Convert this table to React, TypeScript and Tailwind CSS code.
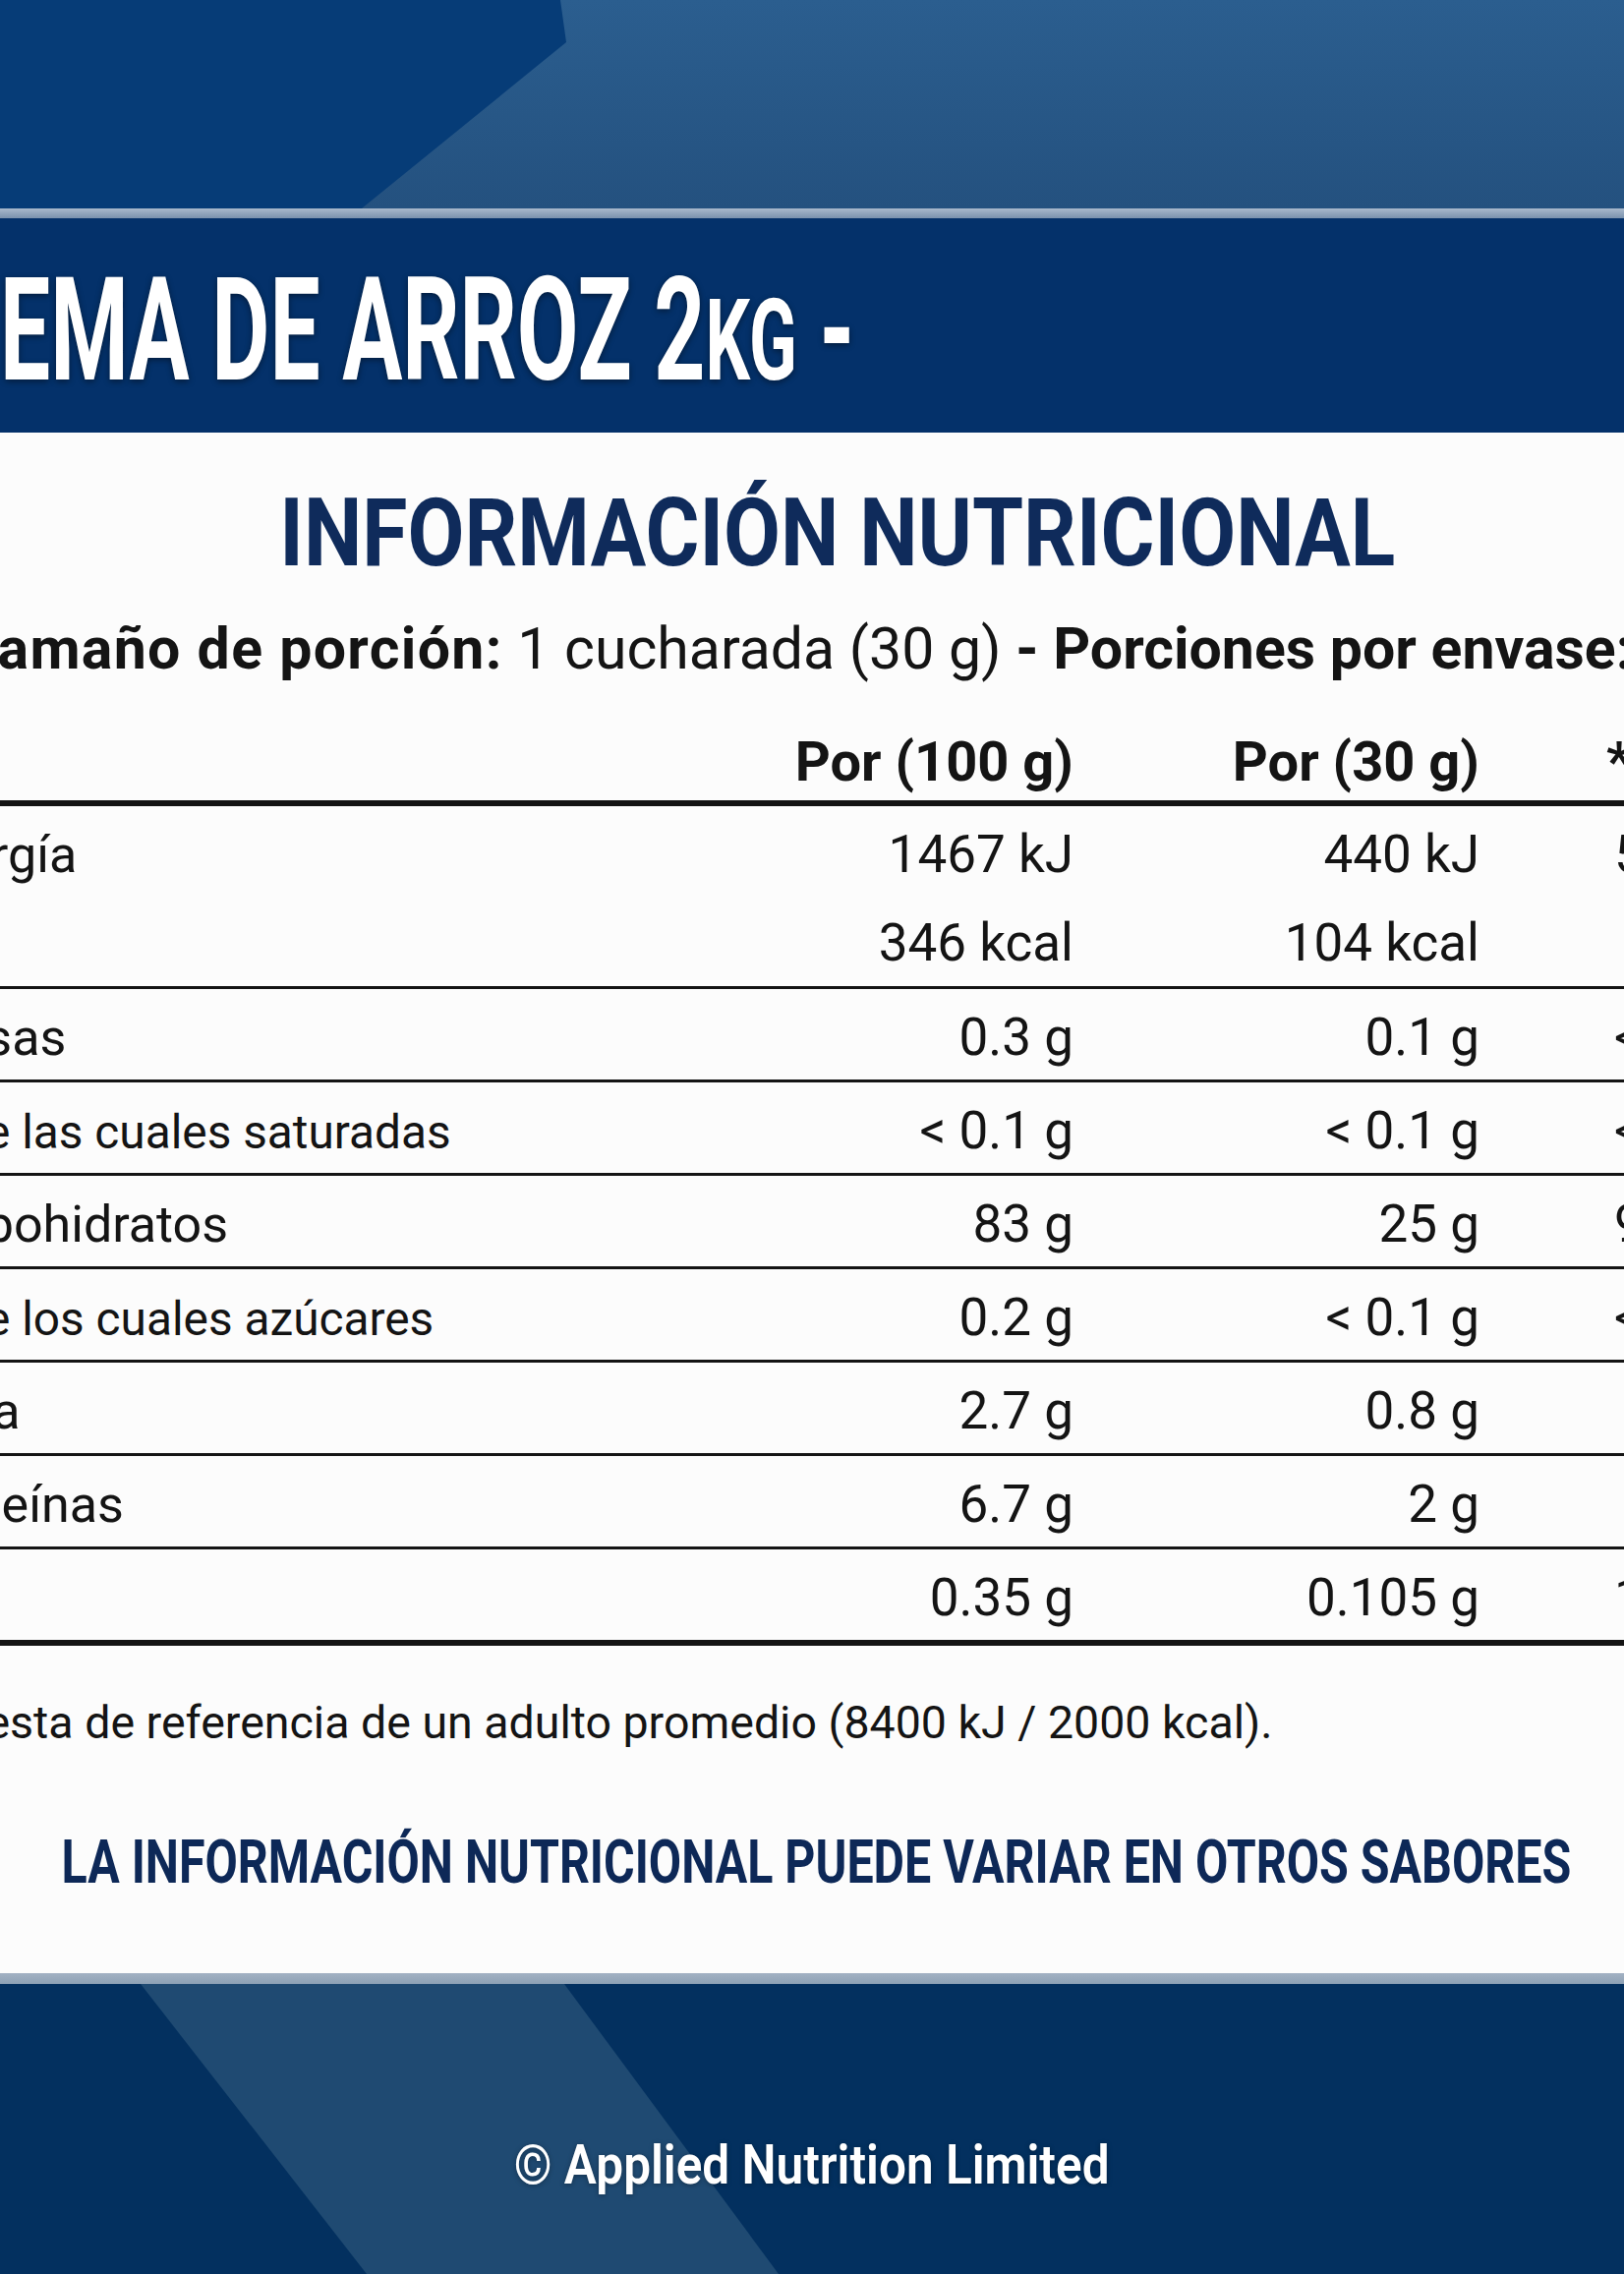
import React from 'react';

type Row = {
  label: string;
  sub?: boolean;
  per100: string;
  per30: string;
  ir: string;
};

const rows: Row[] = [
  { label: 'Grasas', per100: '0.3 g', per30: '0.1 g', ir: '<1%' },
  { label: 'de las cuales saturadas', sub: true, per100: '< 0.1 g', per30: '< 0.1 g', ir: '<1%' },
  { label: 'Carbohidratos', per100: '83 g', per30: '25 g', ir: '9%' },
  { label: 'de los cuales azúcares', sub: true, per100: '0.2 g', per30: '< 0.1 g', ir: '<1%' },
  { label: 'Fibra', per100: '2.7 g', per30: '0.8 g', ir: '\u00a0' },
  { label: 'Proteínas', per100: '6.7 g', per30: '2 g', ir: '\u00a0' },
];

const NBSP = '\u00a0';

function TableRow({ row, last }: { row: Row; last?: boolean }) {
  return (
    <div
      className={`flex items-baseline pt-[23px] leading-none border-[#141414] ${
        last ? 'h-[98px] border-b-[6px]' : 'h-[95px] border-b-[3px]'
      }`}
    >
      <div className={`w-[875px] whitespace-nowrap ${row.sub ? 'pl-[53px] text-[47.8px]' : 'text-[52px]'}`}>
        {row.label}
      </div>
      <div className="w-[312px] text-right text-[53px] whitespace-nowrap">{row.per100}</div>
      <div className="w-[413px] text-right text-[53px] whitespace-nowrap">{row.per30}</div>
      <div className="flex-1 pl-[137px] text-[53px] whitespace-nowrap">{row.ir}</div>
    </div>
  );
}

export default function App() {
  return (
    <div className="w-[1652px] h-[2313px] overflow-hidden flex flex-col font-['Roboto','Liberation_Sans',sans-serif] text-[#141414]">
      {/* top banner with diagonal panel */}
      <div className="relative h-[212px] shrink-0 bg-[#063c77]">
        <svg className="absolute inset-0" width="1652" height="212" viewBox="0 0 1652 212">
          <defs>
            <linearGradient id="topLight" x1="0" y1="0" x2="0" y2="1">
              <stop offset="0" stopColor="#2b5e8f" />
              <stop offset="1" stopColor="#24517f" />
            </linearGradient>
          </defs>
          <polygon points="570,0 576,43 368,212 1652,212 1652,0" fill="url(#topLight)" />
        </svg>
      </div>
      <div className="h-[10px] shrink-0 bg-gradient-to-b from-[#a9b9cc] to-[#7b92ad]" />

      {/* product title */}
      <div className="h-[218px] shrink-0 bg-[#04316a] pt-[42px] flex items-start overflow-hidden">
        <h1 className="origin-left scale-x-[0.623] whitespace-nowrap text-[146px] leading-none font-bold text-white [text-shadow:0_2px_8px_rgba(0,0,0,0.45)]">
          EMA DE ARROZ 2<span className="text-[115px]">KG</span> -
        </h1>
      </div>

      {/* white panel */}
      <div className="h-[1567px] shrink-0 bg-[#fcfcfc] flex flex-col">
        <div className="mt-[54px] flex justify-center pl-[52px]">
          <h2 className="scale-x-[0.876] whitespace-nowrap text-[96px] leading-none font-bold text-[#0f2b5b]">
            INFORMACIÓN NUTRICIONAL
          </h2>
        </div>

        <p className="mt-[40px] -ml-[36px] whitespace-nowrap text-[59px] leading-none">
          <span className="font-bold tracking-[1.3px]">Tamaño de porción:</span> 1 cucharada (30 g){' '}
          <span className="font-bold">- Porciones por envase: 66</span>
        </p>

        <div className="mt-[58px] -ml-[95px] w-[1900px] shrink-0">
          <div className="flex items-end pb-[11px] border-b-[6px] border-[#141414] text-[56px] font-bold leading-none">
            <div className="w-[875px]">{NBSP}</div>
            <div className="w-[312px] text-right whitespace-nowrap">Por (100 g)</div>
            <div className="w-[413px] text-right whitespace-nowrap">Por (30 g)</div>
            <div className="flex-1 pl-[129px] whitespace-nowrap">*IR</div>
          </div>

          <div className="flex items-baseline h-[91px] pt-[23px] leading-none">
            <div className="w-[875px] text-[52px]">Energía</div>
            <div className="w-[312px] text-right text-[53px] whitespace-nowrap">1467 kJ</div>
            <div className="w-[413px] text-right text-[53px] whitespace-nowrap">440 kJ</div>
            <div className="flex-1 pl-[137px] text-[53px]">5%</div>
          </div>
          <div className="flex items-baseline h-[95px] pt-[22px] border-b-[3px] border-[#141414] leading-none">
            <div className="w-[875px] text-[52px]">{NBSP}</div>
            <div className="w-[312px] text-right text-[53px] whitespace-nowrap">346 kcal</div>
            <div className="w-[413px] text-right text-[53px] whitespace-nowrap">104 kcal</div>
            <div className="flex-1 pl-[137px] text-[53px]">{NBSP}</div>
          </div>

          {rows.map((r) => (
            <TableRow key={r.label} row={r} />
          ))}
          <TableRow row={{ label: 'Sal', per100: '0.35 g', per30: '0.105 g', ir: '1.75%' }} last />
        </div>

        <p className="mt-[55px] -ml-[99px] whitespace-nowrap text-[46.5px] leading-none">
          *Ingesta de referencia de un adulto promedio (8400 kJ / 2000 kcal).
        </p>

        <div className="mt-[87px] flex justify-center pl-[8px]">
          <p className="scale-x-[0.78] whitespace-nowrap text-[62px] leading-none font-bold text-[#0d2857]">
            LA INFORMACIÓN NUTRICIONAL PUEDE VARIAR EN OTROS SABORES
          </p>
        </div>
      </div>

      <div className="h-[11px] shrink-0 bg-gradient-to-b from-[#a3b2c3] to-[#8ea1b5]" />

      {/* footer */}
      <div className="relative h-[295px] shrink-0 bg-[#03305f]">
        <svg className="absolute inset-0" width="1652" height="295" viewBox="0 0 1652 295">
          <polygon points="143,0 574,0 792,295 373,295" fill="#1f4a72" />
        </svg>
        <div className="relative pt-[157px] flex justify-center">
          <p className="scale-x-[0.9] whitespace-nowrap text-[55px] leading-none font-semibold text-white [text-shadow:0_1px_6px_rgba(0,0,0,0.35)]">
            © Applied Nutrition Limited
          </p>
        </div>
      </div>
    </div>
  );
}
